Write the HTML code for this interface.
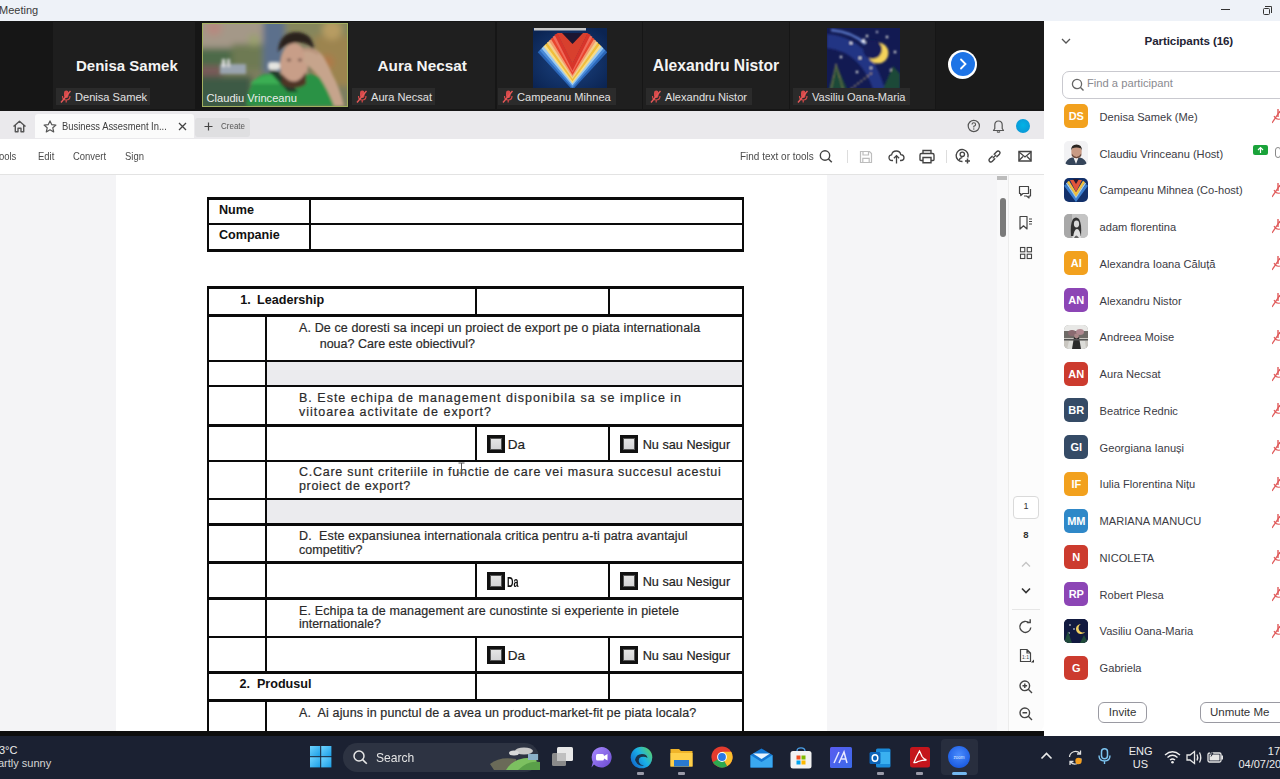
<!DOCTYPE html>
<html><head><meta charset="utf-8">
<style>
*{margin:0;padding:0;box-sizing:border-box}
html,body{width:1280px;height:779px;overflow:hidden;background:#fff;font-family:"Liberation Sans",sans-serif}
.a{position:absolute}
#title{left:0;top:0;width:1280px;height:21px;background:#eef2f8;color:#333;font-size:12px}
#strip{left:0;top:21px;width:1044px;height:90px;background:#1b1b1b}
.tile{position:absolute;top:1px;height:86px;background:#222}
.tname{position:absolute;left:0;right:0;top:34px;text-align:center;color:#fff;font-weight:bold;font-size:15px}
.lbl{position:absolute;top:67px;height:16px;background:#2e2e2e;color:#e6e6e6;font-size:12px;line-height:16px;padding-left:19px;padding-right:4px}
#acro{left:0;top:111px;width:1044px;height:618px;background:#fff}
#tabbar{left:0;top:0;width:1044px;height:27px;background:#e8e8ea}
#toolbar{left:0;top:27px;width:1044px;height:36px;background:#fff;border-bottom:1px solid #e4e4e4}
#content{left:0;top:63px;width:1044px;height:555px;background:#f1f1f3}
#page{left:116px;top:0;width:712px;height:555px;background:#fff}
#black{left:0;top:730.5px;width:1044px;height:6px;background:#0e0e0e}
#parts{left:1044px;top:21px;width:236px;height:715px;background:#fff}
#taskbar{left:0;top:735px;width:1280px;height:44px;background:#1c2130}
.t{white-space:pre;line-height:1}
.pt{-webkit-text-stroke:0.2px currentColor}
.cb{width:18px;height:18px;border:3px solid #111;background:linear-gradient(180deg,#e6e6e6,#d2d2d4);box-shadow:inset 0 0 0 1px #555}
.nm{font-size:15px;font-weight:bold;color:#f4f4f4}
.lb{top:88px;height:16.5px;background:#2b2b2b;color:#e2e2e2;font-size:11.1px;line-height:18.3px;padding-left:19px;white-space:nowrap;overflow:hidden}
.mic{position:absolute;left:4px;top:2px}
.av{left:1064.3px;width:24px;height:24px;border-radius:5px;color:#fff;font-weight:bold;font-size:11px;text-align:center;line-height:24px}
.pn{left:1099.6px;font-size:11.1px;color:#3b3b44}
.btn{border:1.2px solid #9a9aa2;border-radius:6px;background:#fff}
.sx{transform-origin:0 0}
.tb{font-size:11px;color:#4b4b4b;transform:scaleX(0.86);transform-origin:0 0}
</style></head><body>
<div class="a" style="left:0;top:0;width:1280px;height:21px;background:#eef2f8"></div>
<div class="a t" style="left:-1px;top:5.3px;font-size:11px;color:#3a3a3a">Meeting</div>
<div class="a" style="left:1221px;top:9px;width:9px;height:1.3px;background:#333"></div>
<div class="a" style="left:1263px;top:8px;width:7px;height:7px;border:1.3px solid #333;border-radius:1.5px"></div>
<div class="a" style="left:1265px;top:6px;width:7px;height:7px;border-top:1.3px solid #333;border-right:1.3px solid #333;border-radius:0 1.5px 0 0"></div>
<div class="a" style="left:0;top:21px;width:1044px;height:90px;background:#161616"></div>
<!-- tiles -->
<div class="a" style="left:53px;top:22px;width:142px;height:87px;background:#1e1e1e"></div>
<div class="a" style="left:349px;top:22px;width:146px;height:87px;background:#1f1f1f"></div>
<div class="a" style="left:497px;top:22px;width:145px;height:87px;background:#1f1f1f"></div>
<div class="a" style="left:643px;top:22px;width:146px;height:87px;background:#1f1f1f"></div>
<div class="a" style="left:790px;top:22px;width:145px;height:87px;background:#1f1f1f"></div>
<div class="a" style="left:936px;top:22px;width:108px;height:87px;background:#1a1a1a"></div>
<!-- bold names -->
<div class="a t nm" style="left:76px;top:57.5px;">Denisa Samek</div>
<div class="a t nm" style="left:377.5px;top:57.5px;font-size:15.3px">Aura Necsat</div>
<div class="a t nm" style="left:652.8px;top:57.5px;font-size:15.7px">Alexandru Nistor</div>
<!-- video tile -->
<div class="a" style="left:202px;top:22.5px;width:146px;height:84px;border:1.5px solid #a3b060;overflow:hidden;background:#7c8468">
<svg width="146" height="84" style="position:absolute;left:-1.5px;top:-1.5px">
<defs>
<filter id="bl" x="-20%" y="-20%" width="140%" height="140%"><feGaussianBlur stdDeviation="3"/></filter>
<filter id="bl2"><feGaussianBlur stdDeviation="1.4"/></filter>
</defs>
<g filter="url(#bl)">
<rect x="-10" y="-10" width="170" height="104" fill="#7e7e5e"/>
<rect x="-10" y="-10" width="72" height="38" fill="#a49888"/>
<rect x="-10" y="26" width="40" height="22" fill="#4d6a4a"/>
<rect x="30" y="22" width="32" height="26" fill="#6e7a52"/>
<rect x="-10" y="44" width="30" height="12" fill="#7a5a5a"/>
<rect x="61" y="-10" width="22" height="62" fill="#5b708c"/>
<rect x="83" y="-10" width="72" height="30" fill="#86865c"/>
<rect x="112" y="14" width="40" height="50" fill="#9c8450"/>
<rect x="-10" y="54" width="60" height="40" fill="#3e5a44"/>
<circle cx="12" cy="6" r="8" fill="#b58a80"/>
<circle cx="130" cy="8" r="10" fill="#b79c62"/>
<circle cx="125" cy="40" r="7" fill="#b0784a"/>
<circle cx="52" cy="18" r="6" fill="#9aa070"/>
</g>
<g filter="url(#bl2)">
<rect x="18" y="42" width="26" height="10" fill="#9aa4b0"/>
<rect x="20" y="37" width="3" height="8" fill="#e6e6e6"/>
<rect x="25" y="37" width="3" height="8" fill="#d6d6d6"/>
<path d="M44 84 Q46 58 62 52 L108 52 Q132 56 134 84Z" fill="#2c9244"/>
<path d="M48 62 Q58 51 76 53 L78 62Z" fill="#3aae52"/>
<path d="M66 48 Q72 46 82 54 L96 70 L86 70 Z" fill="#213a2a"/>
<rect x="66" y="40" width="12" height="8" rx="3" fill="#e4e4e0"/>
<ellipse cx="92" cy="43" rx="14" ry="22" fill="#c89e88"/>
<path d="M76 30 Q77 10 95 10 Q112 11 112 30 L107 23 Q94 17 80 26Z" fill="#2a221d"/>
<path d="M80 52 Q93 68 104 50 L104 62 Q93 70 80 62Z" fill="#4f3428"/>
<path d="M100 26 Q114 24 121 34 Q127 44 130 52 Q138 66 142 84 L132 84 Q126 68 118 56 Q110 46 101 40 Q104 34 100 26Z" fill="#c6a48c"/><path d="M100 28 Q110 27 116 32" stroke="#a9806a" stroke-width="1.2" fill="none"/><ellipse cx="87" cy="38" rx="2" ry="1.2" fill="#5a4035"/><ellipse cx="98" cy="38" rx="2" ry="1.2" fill="#5a4035"/>
</g>
</svg>
<div class="a t" style="left:3.6px;top:69.5px;font-size:11.1px;color:#ececec;line-height:1">Claudiu Vrinceanu</div>
</div>
<!-- avatars -->
<svg class="a" style="left:533px;top:28px" width="74" height="60" viewBox="0 0 74 60">
<defs><radialGradient id="nv" cx="50%" cy="55%" r="65%"><stop offset="0" stop-color="#1c4585"/><stop offset="1" stop-color="#0b2452"/></radialGradient>
<filter id="b1"><feGaussianBlur stdDeviation="0.7"/></filter></defs>
<rect width="74" height="60" fill="url(#nv)"/>
<rect x="1" y="0" width="52" height="2.5" fill="#c8c8c8"/>
<g filter="url(#b1)" fill="none" stroke-width="3.4" stroke-linejoin="miter" stroke-miterlimit="10">
<polygon points="24,5 39.5,36 55,5" fill="#d8402e" stroke="none"/>
<polygon points="29,5 39.5,16 50,5" fill="#1a1830" stroke="none"/>
<polyline points="6.0,23.0 39.5,59.5 73.0,23.0" stroke="#2a66b8"/><polyline points="7.9,21.1 39.5,57.2 71.1,21.1" stroke="#4a8ad8"/><polyline points="9.8,19.2 39.5,54.9 69.2,19.2" stroke="#9ccaf0"/><polyline points="11.7,17.3 39.5,52.7 67.3,17.3" stroke="#f6dc8a"/><polyline points="13.6,15.4 39.5,50.4 65.4,15.4" stroke="#f0be3a"/><polyline points="15.4,13.6 39.5,48.1 63.6,13.6" stroke="#f2d08a"/><polyline points="17.3,11.7 39.5,45.8 61.7,11.7" stroke="#f49a70"/><polyline points="19.2,9.8 39.5,43.6 59.8,9.8" stroke="#e8452e"/><polyline points="21.1,7.9 39.5,41.3 57.9,7.9" stroke="#f06a5a"/><polyline points="23.0,6.0 39.5,39.0 56.0,6.0" stroke="#d8362a"/>
</g>
</svg>
<svg class="a" style="left:827px;top:28px" width="73" height="61" viewBox="0 0 73 61">
<defs><filter id="b2"><feGaussianBlur stdDeviation="0.8"/></filter></defs>
<rect width="73" height="61" fill="#121a52"/>
<g filter="url(#b2)">
<path d="M0 6 Q28 8 44 30 Q52 42 58 61 L46 61 Q40 44 30 34 Q18 22 0 20Z" fill="#26378a" opacity="0.9"/>
<path d="M4 2 Q26 4 38 16" stroke="#5a78c8" stroke-width="2.5" fill="none"/>
<circle cx="51" cy="25" r="10.5" fill="#f4d35a"/>
<circle cx="45.5" cy="21.5" r="9.5" fill="#141c58"/>
<circle cx="24" cy="15" r="1.3" fill="#fff"/><circle cx="40" cy="8" r="1.2" fill="#ffe"/><circle cx="60" cy="9" r="1.2" fill="#ffe"/>
<circle cx="14" cy="29" r="1.2" fill="#ffe"/><circle cx="33" cy="30" r="1.2" fill="#ffe"/><circle cx="68" cy="24" r="1.2" fill="#ffe"/>
<circle cx="30" cy="44" r="1.2" fill="#ffe"/><circle cx="64" cy="42" r="1.2" fill="#ffe"/><circle cx="50" cy="4" r="1" fill="#fff"/><circle cx="44" cy="40" r="1" fill="#ffe"/>
<path d="M2 61 L9 36 L20 61Z" fill="#1e4a38"/>
<path d="M56 61 L66 38 L73 46 L73 61Z" fill="#1e4a38"/>
<path d="M9 36 L4 61 M9 36 L16 61" stroke="#b9a860" stroke-width="1" stroke-dasharray="1.5 1.5"/>
<path d="M24 61 L46 44" stroke="#c9b070" stroke-width="1.3" stroke-dasharray="2 2"/>
<path d="M34 14 L37 10 L39 15Z" fill="#fff"/>
</g>
</svg>
<!-- labels -->
<div class="a lb" style="left:56px;width:94px"><svg class="mic" width="11" height="13"><rect x="4" y="0.5" width="4.5" height="7.5" rx="2.2" fill="#d84a4a"/><path d="M2.5 6 Q2.5 10 6.2 10 Q10 10 10 6 M6.2 10 V12.5" fill="none" stroke="#d84a4a" stroke-width="1.2"/><line x1="1" y1="12.5" x2="10.5" y2="1" stroke="#e85858" stroke-width="1.4"/></svg>Denisa Samek</div>
<div class="a lb" style="left:352px;width:83px"><svg class="mic" width="11" height="13"><rect x="4" y="0.5" width="4.5" height="7.5" rx="2.2" fill="#d84a4a"/><path d="M2.5 6 Q2.5 10 6.2 10 Q10 10 10 6 M6.2 10 V12.5" fill="none" stroke="#d84a4a" stroke-width="1.2"/><line x1="1" y1="12.5" x2="10.5" y2="1" stroke="#e85858" stroke-width="1.4"/></svg>Aura Necsat</div>
<div class="a lb" style="left:498px;width:118px"><svg class="mic" width="11" height="13"><rect x="4" y="0.5" width="4.5" height="7.5" rx="2.2" fill="#d84a4a"/><path d="M2.5 6 Q2.5 10 6.2 10 Q10 10 10 6 M6.2 10 V12.5" fill="none" stroke="#d84a4a" stroke-width="1.2"/><line x1="1" y1="12.5" x2="10.5" y2="1" stroke="#e85858" stroke-width="1.4"/></svg>Campeanu Mihnea</div>
<div class="a lb" style="left:646px;width:106px"><svg class="mic" width="11" height="13"><rect x="4" y="0.5" width="4.5" height="7.5" rx="2.2" fill="#d84a4a"/><path d="M2.5 6 Q2.5 10 6.2 10 Q10 10 10 6 M6.2 10 V12.5" fill="none" stroke="#d84a4a" stroke-width="1.2"/><line x1="1" y1="12.5" x2="10.5" y2="1" stroke="#e85858" stroke-width="1.4"/></svg>Alexandru Nistor</div>
<div class="a lb" style="left:793px;width:117px"><svg class="mic" width="11" height="13"><rect x="4" y="0.5" width="4.5" height="7.5" rx="2.2" fill="#d84a4a"/><path d="M2.5 6 Q2.5 10 6.2 10 Q10 10 10 6 M6.2 10 V12.5" fill="none" stroke="#d84a4a" stroke-width="1.2"/><line x1="1" y1="12.5" x2="10.5" y2="1" stroke="#e85858" stroke-width="1.4"/></svg>Vasiliu Oana-Maria</div>
<!-- next arrow -->
<div class="a" style="left:948px;top:49.5px;width:29px;height:29px;border-radius:50%;background:#fff"></div>
<div class="a" style="left:950.5px;top:52px;width:24px;height:24px;border-radius:50%;background:#1e74e6"></div>
<svg class="a" style="left:955px;top:56px" width="16" height="16"><polyline points="6,3.5 10.5,8 6,12.5" fill="none" stroke="#fff" stroke-width="1.8" stroke-linecap="round"/></svg>

<div class="a" style="left:0;top:111px;width:1044px;height:27.5px;background:#eae9ec"></div>
<div class="a" style="left:34.6px;top:114px;width:159.5px;height:24px;background:#fbfbfb;border-radius:3px 3px 0 0"></div>
<div class="a" style="left:195px;top:118px;width:55px;height:18.5px;background:#dfdfe1;border-radius:3px"></div>
<svg class="a ic" style="left:12px;top:120px" width="15" height="13" viewBox="0 0 15 13"><path d="M1.5 6.5 L7.5 1.3 L13.5 6.5 M3.3 5.2 V11.8 H6 V8.3 H9 V11.8 H11.7 V5.2" fill="none" stroke="#555" stroke-width="1.4" stroke-linejoin="round"/></svg>
<svg class="a" style="left:43px;top:120px" width="14" height="13" viewBox="0 0 14 13"><path d="M7 0.9 L8.8 4.7 L12.9 5.1 L9.8 7.8 L10.7 11.9 L7 9.8 L3.3 11.9 L4.2 7.8 L1.1 5.1 L5.2 4.7Z" fill="none" stroke="#555" stroke-width="1.2" stroke-linejoin="round"/></svg>
<div class="a t sx" style="left:62px;top:121px;font-size:10.6px;color:#3c3c3c;transform:scaleX(0.885)">Business Assesment In...</div>
<svg class="a" style="left:178px;top:122px" width="9" height="9"><path d="M1 1 L8 8 M8 1 L1 8" stroke="#444" stroke-width="1.3"/></svg>
<svg class="a" style="left:204px;top:122px" width="9" height="9"><path d="M4.5 0.5 V8.5 M0.5 4.5 H8.5" stroke="#444" stroke-width="1.2"/></svg>
<div class="a t sx" style="left:220.5px;top:122px;font-size:9.3px;color:#555;transform:scaleX(0.86)">Create</div>
<svg class="a" style="left:966px;top:119px" width="15" height="15"><circle cx="7.8" cy="7" r="5.6" fill="none" stroke="#555" stroke-width="1.2"/><path d="M6 5.6 Q6 3.8 7.8 3.8 Q9.6 3.8 9.6 5.4 Q9.6 6.6 7.8 7.3 V8.4" fill="none" stroke="#555" stroke-width="1.1"/><circle cx="7.8" cy="10" r="0.7" fill="#555"/></svg>
<svg class="a" style="left:991px;top:119px" width="15" height="15"><path d="M2.5 11.5 H12.5 L11.2 9.5 V6 Q11.2 2 7.5 2 Q3.8 2 3.8 6 V9.5Z" fill="none" stroke="#555" stroke-width="1.2" stroke-linejoin="round"/><path d="M6 12.5 Q7.5 14 9 12.5" fill="none" stroke="#555" stroke-width="1.1"/></svg>
<div class="a" style="left:1016px;top:119.3px;width:14px;height:14px;border-radius:50%;background:radial-gradient(circle at 50% 45%,#00b3e6,#0a9ad8 70%,#7ad6f0 100%)"></div>
<!-- toolbar -->
<div class="a" style="left:0;top:138.5px;width:1044px;height:35.5px;background:#fff"></div>
<div class="a" style="left:0;top:174px;width:1044px;height:1px;background:#e3e3e3"></div>
<div class="a t tb" style="left:-1px;top:151px">ools</div>
<div class="a t tb" style="left:37.6px;top:151px">Edit</div>
<div class="a t tb" style="left:72.8px;top:151px">Convert</div>
<div class="a t tb" style="left:125px;top:151px">Sign</div>
<div class="a t tb" style="left:740px;top:150.5px;font-size:10.8px;transform:scaleX(0.925)">Find text or tools</div>
<svg class="a" style="left:818px;top:148px" width="16" height="16"><circle cx="7" cy="7.5" r="4.7" fill="none" stroke="#444" stroke-width="1.4"/><line x1="10.3" y1="10.8" x2="13.8" y2="14.3" stroke="#444" stroke-width="1.5"/></svg>
<div class="a" style="left:847px;top:150px;width:1px;height:13px;background:#ddd"></div>
<svg class="a" style="left:859px;top:150px" width="14" height="14"><path d="M1.5 1.5 H10.5 L12.5 3.5 V12.5 H1.5Z M4 1.5 V5 H9.5 V1.5 M3.8 12.5 V8.3 H10.2 V12.5" fill="none" stroke="#bdbdbd" stroke-width="1.2"/></svg>
<svg class="a" style="left:888px;top:149px" width="17" height="15"><path d="M5 11.5 H4 Q1 11.5 1 8.6 Q1 6 3.6 5.8 Q4.4 2 8.3 2 Q12 2 12.8 5.6 Q16 5.8 16 8.7 Q16 11.5 13 11.5 H12" fill="none" stroke="#444" stroke-width="1.3"/><path d="M8.5 14.5 V6.8 M5.9 9.2 L8.5 6.6 L11.1 9.2" fill="none" stroke="#444" stroke-width="1.3"/></svg>
<svg class="a" style="left:919px;top:149px" width="16" height="15"><path d="M4 4.5 V1.5 H12 V4.5 M4 11.5 H2 Q1 11.5 1 10.5 V6 Q1 4.5 2.5 4.5 H13.5 Q15 4.5 15 6 V10.5 Q15 11.5 14 11.5 H12 M4 8.5 H12 V13.8 H4Z" fill="none" stroke="#444" stroke-width="1.4"/></svg>
<div class="a" style="left:945.5px;top:150px;width:1px;height:13px;background:#ddd"></div>
<svg class="a" style="left:955px;top:148px" width="17" height="17"><path d="M12.8 9.5 A6 6 0 1 0 7.5 13.5" fill="none" stroke="#444" stroke-width="1.4"/><circle cx="7.3" cy="6.3" r="2.2" fill="none" stroke="#444" stroke-width="1.3"/><path d="M4.2 12 Q5 9.6 7.3 9.6" fill="none" stroke="#444" stroke-width="1.3"/><path d="M12.5 10.5 V15.5 M10 13 H15" stroke="#444" stroke-width="1.5"/></svg>
<svg class="a" style="left:987px;top:149px" width="15" height="15"><path d="M6.2 8.8 L8.8 6.2 M5.2 7.2 L2.8 9.6 Q1.3 11.1 2.6 12.4 Q3.9 13.7 5.4 12.2 L7.8 9.8 M7.2 5.2 L9.6 2.8 Q11.1 1.3 12.4 2.6 Q13.7 3.9 12.2 5.4 L9.8 7.8" fill="none" stroke="#444" stroke-width="1.4" stroke-linecap="round"/></svg>
<svg class="a" style="left:1018px;top:150px" width="14" height="13"><rect x="1" y="1.5" width="12" height="9.5" fill="none" stroke="#444" stroke-width="1.5"/><path d="M1 2 L7 7 L13 2 M1 10.5 L5 6.5 M13 10.5 L9 6.5" fill="none" stroke="#444" stroke-width="1.3"/></svg>
<!-- content area -->
<div class="a" style="left:0;top:175px;width:116px;height:557px;background:#f4f4f6"></div>
<div class="a" style="left:116px;top:175px;width:711px;height:557px;background:#fff"></div>
<div class="a" style="left:827px;top:175px;width:170px;height:557px;background:#f5f5f7"></div>
<div class="a" style="left:997px;top:175px;width:11px;height:557px;background:#f9f9fa"></div>
<div class="a" style="left:997px;top:176px;width:10px;height:4px;background:#bcbcbc"></div>
<div class="a" style="left:999.5px;top:198px;width:6.2px;height:39px;background:#7a7a7a;border-radius:3px"></div>
<div class="a" style="left:1008px;top:175px;width:36px;height:557px;background:#fcfcfc;border-left:1px solid #ececec;border-radius:0 0 8px 0"></div>
<svg class="a" style="left:1018px;top:185px" width="16" height="16"><path d="M1.5 1.5 H10.5 V8.5 H5 L2.8 10.5 V8.5 H1.5Z" fill="none" stroke="#444" stroke-width="1.2" stroke-linejoin="round"/><path d="M12.5 4 V11 H11 V13 L8.6 11 H6" fill="none" stroke="#444" stroke-width="1.2" stroke-linejoin="round"/></svg>
<svg class="a" style="left:1018px;top:215px" width="16" height="16"><path d="M2 1.5 H9 V14 L5.5 10.8 L2 14Z" fill="none" stroke="#444" stroke-width="1.2" stroke-linejoin="round"/><path d="M11 4 H14 M11 6.5 H14 M11 9 H14" stroke="#444" stroke-width="1"/></svg>
<svg class="a" style="left:1019px;top:246px" width="14" height="14"><rect x="1.5" y="1.5" width="4.3" height="4.3" fill="none" stroke="#444" stroke-width="1.1"/><rect x="8.2" y="1.5" width="4.3" height="4.3" fill="none" stroke="#444" stroke-width="1.1"/><rect x="1.5" y="8.2" width="4.3" height="4.3" fill="none" stroke="#444" stroke-width="1.1"/><rect x="8.2" y="8.2" width="4.3" height="4.3" fill="none" stroke="#444" stroke-width="1.1"/></svg>
<div class="a" style="left:1013px;top:495.7px;width:26px;height:23.3px;border:1px solid #dadada;border-radius:4px;background:#fff"></div>
<div class="a t" style="left:1013px;width:26px;text-align:center;top:501.5px;font-size:9px;color:#333">1</div>
<div class="a t" style="left:1013px;width:26px;text-align:center;top:529.5px;font-size:9.5px;font-weight:bold;color:#333">8</div>
<svg class="a" style="left:1020px;top:560px" width="12" height="9"><polyline points="2,6.5 6,2.5 10,6.5" fill="none" stroke="#c4c4c4" stroke-width="1.3"/></svg>
<svg class="a" style="left:1020px;top:586px" width="12" height="9"><polyline points="2,2.5 6,6.5 10,2.5" fill="none" stroke="#333" stroke-width="1.6"/></svg>
<div class="a" style="left:1012px;top:609px;width:28px;height:1px;background:#e6e6e6"></div>
<svg class="a" style="left:1018px;top:619px" width="16" height="16"><path d="M12.8 8.5 A5.5 5.5 0 1 1 11 3.8" fill="none" stroke="#444" stroke-width="1.4"/><path d="M8.8 3.5 H12.2 V0.3" fill="none" stroke="#444" stroke-width="1.4"/></svg>
<svg class="a" style="left:1018px;top:648px" width="17" height="17"><path d="M2.5 1.5 H9 L12.5 5 V13.5 H2.5Z M9 1.5 V5 H12.5" fill="none" stroke="#444" stroke-width="1.2"/><text x="4" y="11" font-size="5" font-family="Liberation Sans" fill="#444">1:1</text><path d="M13 14.5 L16 14.5 L16 11.5Z" fill="#333"/></svg>
<svg class="a" style="left:1018px;top:679px" width="16" height="16"><circle cx="6.8" cy="6.8" r="4.8" fill="none" stroke="#444" stroke-width="1.4"/><path d="M10.3 10.3 L14 14 M4.5 6.8 H9.1 M6.8 4.5 V9.1" stroke="#444" stroke-width="1.4"/></svg>
<svg class="a" style="left:1018px;top:706px" width="16" height="16"><circle cx="6.8" cy="6.8" r="4.8" fill="none" stroke="#444" stroke-width="1.4"/><path d="M10.3 10.3 L14 14 M4.5 6.8 H9.1" stroke="#444" stroke-width="1.4"/></svg>

<div id="pdf" class="a" style="left:0;top:0;width:1044px;height:730.5px;overflow:hidden">
<div class="a" style="left:206.5px;top:197px;width:537.5px;height:2.5px;background:#0a0a0a"></div>
<div class="a" style="left:206.5px;top:223px;width:537.5px;height:2px;background:#0a0a0a"></div>
<div class="a" style="left:206.5px;top:249px;width:537.5px;height:2.5px;background:#0a0a0a"></div>
<div class="a" style="left:206.5px;top:197px;width:2.1999999999999886px;height:54.5px;background:#0a0a0a"></div>
<div class="a" style="left:742px;top:197px;width:2.2999999999999545px;height:54.5px;background:#0a0a0a"></div>
<div class="a" style="left:308.5px;top:197px;width:2.0px;height:54.5px;background:#0a0a0a"></div>
<div class="a t" style="left:218.9px;top:203.59px;font-size:12.6px;letter-spacing:0px;color:#111;font-weight:bold;">Nume</div>
<div class="a t" style="left:218.9px;top:229.09px;font-size:12.6px;letter-spacing:0px;color:#111;font-weight:bold;">Companie</div>
<div class="a" style="left:206.5px;top:286.3px;width:537.8px;height:2.3999999999999773px;background:#0a0a0a"></div>
<div class="a" style="left:206.5px;top:314.3px;width:537.8px;height:2.3999999999999773px;background:#0a0a0a"></div>
<div class="a" style="left:206.5px;top:359.8px;width:537.8px;height:2.3999999999999773px;background:#0a0a0a"></div>
<div class="a" style="left:206.5px;top:384.8px;width:537.8px;height:2.3999999999999773px;background:#0a0a0a"></div>
<div class="a" style="left:206.5px;top:424.3px;width:537.8px;height:2.3999999999999773px;background:#0a0a0a"></div>
<div class="a" style="left:206.5px;top:459.8px;width:537.8px;height:2.3999999999999773px;background:#0a0a0a"></div>
<div class="a" style="left:206.5px;top:497.8px;width:537.8px;height:2.3999999999999773px;background:#0a0a0a"></div>
<div class="a" style="left:206.5px;top:523.3px;width:537.8px;height:2.400000000000091px;background:#0a0a0a"></div>
<div class="a" style="left:206.5px;top:561.3px;width:537.8px;height:2.400000000000091px;background:#0a0a0a"></div>
<div class="a" style="left:206.5px;top:597.3px;width:537.8px;height:2.400000000000091px;background:#0a0a0a"></div>
<div class="a" style="left:206.5px;top:635.8px;width:537.8px;height:2.400000000000091px;background:#0a0a0a"></div>
<div class="a" style="left:206.5px;top:671.3px;width:537.8px;height:2.400000000000091px;background:#0a0a0a"></div>
<div class="a" style="left:206.5px;top:699.3px;width:537.8px;height:2.400000000000091px;background:#0a0a0a"></div>
<div class="a" style="left:206.5px;top:286.3px;width:2.1999999999999886px;height:453.7px;background:#0a0a0a"></div>
<div class="a" style="left:742px;top:286.3px;width:2.2999999999999545px;height:453.7px;background:#0a0a0a"></div>
<div class="a" style="left:265px;top:315.5px;width:2.1999999999999886px;height:357.0px;background:#0a0a0a"></div>
<div class="a" style="left:265px;top:700.5px;width:2.1999999999999886px;height:39.5px;background:#0a0a0a"></div>
<div class="a" style="left:474.5px;top:287.5px;width:2.1999999999999886px;height:28.0px;background:#0a0a0a"></div>
<div class="a" style="left:608px;top:287.5px;width:2.2000000000000455px;height:28.0px;background:#0a0a0a"></div>
<div class="a" style="left:474.5px;top:425.5px;width:2.1999999999999886px;height:35.5px;background:#0a0a0a"></div>
<div class="a" style="left:608px;top:425.5px;width:2.2000000000000455px;height:35.5px;background:#0a0a0a"></div>
<div class="a" style="left:474.5px;top:562.5px;width:2.1999999999999886px;height:36.0px;background:#0a0a0a"></div>
<div class="a" style="left:608px;top:562.5px;width:2.2000000000000455px;height:36.0px;background:#0a0a0a"></div>
<div class="a" style="left:474.5px;top:637px;width:2.1999999999999886px;height:63.5px;background:#0a0a0a"></div>
<div class="a" style="left:608px;top:637px;width:2.2000000000000455px;height:63.5px;background:#0a0a0a"></div>
<div class="a" style="left:267.2px;top:362.2px;width:474.8px;height:22.6px;background:#ebebee"></div>
<div class="a" style="left:267.2px;top:500.2px;width:474.8px;height:23.1px;background:#ebebee"></div>
<div class="a t" style="left:240.3px;top:293.89px;font-size:12.6px;letter-spacing:0px;color:#111;font-weight:bold;">1.</div>
<div class="a t" style="left:257px;top:293.89px;font-size:12.6px;letter-spacing:0px;color:#111;font-weight:bold;">Leadership</div>
<div class="a t" style="left:239.5px;top:677.89px;font-size:12.6px;letter-spacing:0px;color:#111;font-weight:bold;">2.</div>
<div class="a t" style="left:256.9px;top:677.89px;font-size:12.6px;letter-spacing:0px;color:#111;font-weight:bold;">Produsul</div>
<div class="a t pt" style="left:299px;top:321.57px;font-size:12.5px;letter-spacing:0.118px;color:#2a2a2a;">A. De ce doresti sa incepi un proiect de export pe o piata internationala</div>
<div class="a t pt" style="left:319.7px;top:337.68px;font-size:12.5px;letter-spacing:0.011px;color:#2a2a2a;">noua? Care este obiectivul?</div>
<div class="a t pt" style="left:299px;top:391.88px;font-size:12.5px;letter-spacing:1.003px;color:#2a2a2a;">B. Este echipa de management disponibila sa se implice in</div>
<div class="a t pt" style="left:299px;top:405.68px;font-size:12.5px;letter-spacing:0.981px;color:#2a2a2a;">viitoarea activitate de export?</div>
<div class="a t pt" style="left:299px;top:466.07px;font-size:12.5px;letter-spacing:0.737px;color:#2a2a2a;">C.Care sunt criteriile in functie de care vei masura succesul acestui</div>
<div class="a t pt" style="left:299px;top:480.18px;font-size:12.5px;letter-spacing:0.661px;color:#2a2a2a;">proiect de export?</div>
<div class="a t pt" style="left:299px;top:529.88px;font-size:12.5px;letter-spacing:0.142px;color:#2a2a2a;">D.  Este expansiunea internationala critica pentru a-ti patra avantajul</div>
<div class="a t pt" style="left:299px;top:543.88px;font-size:12.5px;letter-spacing:0.034px;color:#2a2a2a;">competitiv?</div>
<div class="a t pt" style="left:299px;top:604.67px;font-size:12.5px;letter-spacing:0.136px;color:#2a2a2a;">E. Echipa ta de management are cunostinte si experiente in pietele</div>
<div class="a t pt" style="left:299px;top:617.67px;font-size:12.5px;letter-spacing:-0.012px;color:#2a2a2a;">internationale?</div>
<div class="a t pt" style="left:299px;top:706.58px;font-size:12.5px;letter-spacing:0.133px;color:#2a2a2a;">A.  Ai ajuns in punctul de a avea un product-market-fit pe piata locala?</div>
<div class="a cb" style="left:486.5px;top:434.7px"></div>
<div class="a cb" style="left:620.2px;top:434.7px"></div>
<div class="a t pt" style="left:507.7px;top:437.82px;font-size:13.5px;letter-spacing:0px;color:#222;">Da</div>
<div class="a t pt" style="left:642.7px;top:438.50px;font-size:12.7px;letter-spacing:0px;color:#222;">Nu sau Nesigur</div>
<div class="a cb" style="left:486.5px;top:572px"></div>
<div class="a cb" style="left:620.2px;top:572px"></div>
<div class="a t" style="left:506.7px;top:574.90px;font-size:14px;letter-spacing:0px;color:#111;font-weight:bold;transform:scaleX(0.64);transform-origin:0 0;">Da</div>
<div class="a t pt" style="left:642.7px;top:576.00px;font-size:12.7px;letter-spacing:0px;color:#222;">Nu sau Nesigur</div>
<div class="a cb" style="left:486.5px;top:646.2px"></div>
<div class="a cb" style="left:620.2px;top:646.2px"></div>
<div class="a t pt" style="left:507.7px;top:649.32px;font-size:13.5px;letter-spacing:0px;color:#222;">Da</div>
<div class="a t pt" style="left:642.7px;top:650.00px;font-size:12.7px;letter-spacing:0px;color:#222;">Nu sau Nesigur</div>
<svg class="a" style="left:457px;top:462px" width="9" height="12"><path d="M1.5 1 H7.5 M4.5 1 V11 M1.5 11 H7.5" stroke="#555" stroke-width="1"/></svg>
</div>
<div id="black" class="a"></div>
<div class="a" style="left:1044px;top:21px;width:236px;height:715px;background:#fff"></div>
<svg class="a" style="left:1060px;top:36px" width="12" height="10"><polyline points="2,3 6,7 10,3" fill="none" stroke="#555" stroke-width="1.3"/></svg>
<div class="a t" style="left:1144.6px;top:35.2px;font-size:11.6px;font-weight:bold;color:#232333;letter-spacing:-0.1px">Participants (16)</div>
<div class="a" style="left:1062px;top:70.5px;width:230px;height:28px;border:1.2px solid #c9c9cf;border-radius:7px;background:#fff"></div>
<svg class="a" style="left:1070px;top:77px" width="16" height="16"><circle cx="7" cy="7" r="4.6" fill="none" stroke="#666" stroke-width="1.3"/><line x1="10.3" y1="10.3" x2="13.5" y2="13.5" stroke="#666" stroke-width="1.4"/></svg>
<div class="a t" style="left:1087px;top:78px;font-size:11.2px;color:#8a8a90">Find a participant</div>
<div class="a av" style="top:104.0px;background:#f2a11e"><span>DS</span></div>
<div class="a t pn" style="top:111.77px">Denisa Samek (Me)</div>
<svg class="a" style="left:1272px;top:108.0px" width="8" height="16"><path d="M6 1 L6 9" stroke="#e05a5a" stroke-width="1.4"/><line x1="0" y1="15" x2="8" y2="3" stroke="#e05a5a" stroke-width="1.3"/><path d="M2 8 Q4 12 8 11" fill="none" stroke="#e05a5a" stroke-width="1.1"/></svg>
<div class="a av" style="top:140.8px;background:#f4f4f6;overflow:hidden"><svg width="24" height="24"><defs><filter id="cf"><feGaussianBlur stdDeviation="0.35"/></filter></defs><g filter="url(#cf)"><rect width="24" height="24" fill="#f2f2f4"/><path d="M1 24 Q2 18 8 16.5 L16 16.5 Q22 18 23 24Z" fill="#34445a"/><path d="M9.5 16.5 L12 23 L14.5 16.5Z" fill="#f0f0f0"/><ellipse cx="12.5" cy="11" rx="5.2" ry="6.3" fill="#c89a84"/><path d="M7 9.5 Q7 3.5 12.5 3.5 Q18 3.5 18 9.5 L17 7.5 Q12.5 5.5 8 7.5Z" fill="#2c2622"/><path d="M7.6 12.5 Q12.5 19.5 17.4 12.5 L17.2 15 Q12.5 19.5 7.8 15Z" fill="#6a4a3c"/></g></svg></div>
<div class="a t pn" style="top:148.53px">Claudiu Vrinceanu (Host)</div>
<div class="a" style="left:1253px;top:145.2px;width:15px;height:10px;background:#1aa33a;border-radius:2px"></div>
<svg class="a" style="left:1254px;top:145.2px" width="13" height="10"><polyline points="4,5 6.5,2.5 9,5" fill="none" stroke="#fff" stroke-width="1.2"/><line x1="6.5" y1="3" x2="6.5" y2="8" stroke="#fff" stroke-width="1.2"/></svg>
<div class="a" style="left:1275px;top:146.8px;width:6px;height:11px;border:1.3px solid #888;border-radius:3px"></div>
<div class="a av" style="top:177.6px;background:#12306a;overflow:hidden"><svg width="24" height="24"><polyline points="1,7 12,22 23,7" fill="none" stroke="#3b7fd0" stroke-width="2.4"/><polyline points="2.5,5 12,19 21.5,5" fill="none" stroke="#9ccaf0" stroke-width="1.6"/><polyline points="4,3.5 12,16.5 20,3.5" fill="none" stroke="#f0c040" stroke-width="2.4"/><polygon points="6,2 12,14 18,2" fill="#e2543a"/><polygon points="9,1 12,6 15,1" fill="#2a1a30"/></svg></div>
<div class="a t pn" style="top:185.28px">Campeanu Mihnea (Co-host)</div>
<svg class="a" style="left:1272px;top:181.6px" width="8" height="16"><path d="M6 1 L6 9" stroke="#e05a5a" stroke-width="1.4"/><line x1="0" y1="15" x2="8" y2="3" stroke="#e05a5a" stroke-width="1.3"/><path d="M2 8 Q4 12 8 11" fill="none" stroke="#e05a5a" stroke-width="1.1"/></svg>
<div class="a av" style="top:214.3px;background:#bdbdbd;overflow:hidden"><svg width="24" height="24"><defs><filter id="af"><feGaussianBlur stdDeviation="0.6"/></filter></defs><g filter="url(#af)"><rect width="24" height="24" fill="#c4c4c4"/><rect x="0" y="0" width="8" height="24" fill="#a8a8a8"/><path d="M7 22 Q6 10 9 5 Q12 2 15 5 Q18 10 17 22Z" fill="#333"/><ellipse cx="12.5" cy="10" rx="2.6" ry="3.4" fill="#d8d8d8"/><path d="M9 24 Q10 15 13 15 Q16 15 17 24Z" fill="#e0e0e0"/><path d="M10 24 Q12 19 15 24Z" fill="#666"/></g></svg></div>
<div class="a t pn" style="top:222.05px">adam florentina</div>
<svg class="a" style="left:1272px;top:218.3px" width="8" height="16"><path d="M6 1 L6 9" stroke="#e05a5a" stroke-width="1.4"/><line x1="0" y1="15" x2="8" y2="3" stroke="#e05a5a" stroke-width="1.3"/><path d="M2 8 Q4 12 8 11" fill="none" stroke="#e05a5a" stroke-width="1.1"/></svg>
<div class="a av" style="top:251.1px;background:#f2a11e"><span>AI</span></div>
<div class="a t pn" style="top:258.81px">Alexandra Ioana Căluță</div>
<svg class="a" style="left:1272px;top:255.1px" width="8" height="16"><path d="M6 1 L6 9" stroke="#e05a5a" stroke-width="1.4"/><line x1="0" y1="15" x2="8" y2="3" stroke="#e05a5a" stroke-width="1.3"/><path d="M2 8 Q4 12 8 11" fill="none" stroke="#e05a5a" stroke-width="1.1"/></svg>
<div class="a av" style="top:287.9px;background:#8c45b5"><span>AN</span></div>
<div class="a t pn" style="top:295.56px">Alexandru Nistor</div>
<svg class="a" style="left:1272px;top:291.9px" width="8" height="16"><path d="M6 1 L6 9" stroke="#e05a5a" stroke-width="1.4"/><line x1="0" y1="15" x2="8" y2="3" stroke="#e05a5a" stroke-width="1.3"/><path d="M2 8 Q4 12 8 11" fill="none" stroke="#e05a5a" stroke-width="1.1"/></svg>
<div class="a av" style="top:324.7px;background:#9a9a96;overflow:hidden"><svg width="24" height="24"><defs><filter id="anf"><feGaussianBlur stdDeviation="0.6"/></filter></defs><g filter="url(#anf)"><rect width="24" height="24" fill="#c9c6c0"/><rect y="0" width="24" height="6" fill="#e8e8e6"/><rect y="6" width="24" height="7" fill="#6e6a66"/><ellipse cx="8" cy="8" rx="4" ry="3" fill="#8a6a70"/><ellipse cx="16" cy="7" rx="4" ry="3" fill="#b08890"/><path d="M3 24 L5 16 L21 16 L22 24Z" fill="#dcdcd8"/><path d="M8 24 L10 12 L15 12 L17 24Z" fill="#2a2a2a"/><circle cx="12.5" cy="11" r="2.4" fill="#a88"/><rect y="14" width="24" height="1.5" fill="#555"/></g></svg></div>
<div class="a t pn" style="top:332.32px">Andreea Moise</div>
<svg class="a" style="left:1272px;top:328.7px" width="8" height="16"><path d="M6 1 L6 9" stroke="#e05a5a" stroke-width="1.4"/><line x1="0" y1="15" x2="8" y2="3" stroke="#e05a5a" stroke-width="1.3"/><path d="M2 8 Q4 12 8 11" fill="none" stroke="#e05a5a" stroke-width="1.1"/></svg>
<div class="a av" style="top:361.5px;background:#cc3b2e"><span>AN</span></div>
<div class="a t pn" style="top:369.08px">Aura Necsat</div>
<svg class="a" style="left:1272px;top:365.5px" width="8" height="16"><path d="M6 1 L6 9" stroke="#e05a5a" stroke-width="1.4"/><line x1="0" y1="15" x2="8" y2="3" stroke="#e05a5a" stroke-width="1.3"/><path d="M2 8 Q4 12 8 11" fill="none" stroke="#e05a5a" stroke-width="1.1"/></svg>
<div class="a av" style="top:398.2px;background:#354b66"><span>BR</span></div>
<div class="a t pn" style="top:405.84px">Beatrice Rednic</div>
<svg class="a" style="left:1272px;top:402.2px" width="8" height="16"><path d="M6 1 L6 9" stroke="#e05a5a" stroke-width="1.4"/><line x1="0" y1="15" x2="8" y2="3" stroke="#e05a5a" stroke-width="1.3"/><path d="M2 8 Q4 12 8 11" fill="none" stroke="#e05a5a" stroke-width="1.1"/></svg>
<div class="a av" style="top:435.0px;background:#354b66"><span>GI</span></div>
<div class="a t pn" style="top:442.60px">Georgiana Ianuși</div>
<svg class="a" style="left:1272px;top:439.0px" width="8" height="16"><path d="M6 1 L6 9" stroke="#e05a5a" stroke-width="1.4"/><line x1="0" y1="15" x2="8" y2="3" stroke="#e05a5a" stroke-width="1.3"/><path d="M2 8 Q4 12 8 11" fill="none" stroke="#e05a5a" stroke-width="1.1"/></svg>
<div class="a av" style="top:471.8px;background:#f2a11e"><span>IF</span></div>
<div class="a t pn" style="top:479.36px">Iulia Florentina Nițu</div>
<svg class="a" style="left:1272px;top:475.8px" width="8" height="16"><path d="M6 1 L6 9" stroke="#e05a5a" stroke-width="1.4"/><line x1="0" y1="15" x2="8" y2="3" stroke="#e05a5a" stroke-width="1.3"/><path d="M2 8 Q4 12 8 11" fill="none" stroke="#e05a5a" stroke-width="1.1"/></svg>
<div class="a av" style="top:508.6px;background:#2f88c8"><span>MM</span></div>
<div class="a t pn" style="top:516.12px">MARIANA MANUCU</div>
<svg class="a" style="left:1272px;top:512.6px" width="8" height="16"><path d="M6 1 L6 9" stroke="#e05a5a" stroke-width="1.4"/><line x1="0" y1="15" x2="8" y2="3" stroke="#e05a5a" stroke-width="1.3"/><path d="M2 8 Q4 12 8 11" fill="none" stroke="#e05a5a" stroke-width="1.1"/></svg>
<div class="a av" style="top:545.4px;background:#cc3b2e"><span>N</span></div>
<div class="a t pn" style="top:552.89px">NICOLETA</div>
<svg class="a" style="left:1272px;top:549.4px" width="8" height="16"><path d="M6 1 L6 9" stroke="#e05a5a" stroke-width="1.4"/><line x1="0" y1="15" x2="8" y2="3" stroke="#e05a5a" stroke-width="1.3"/><path d="M2 8 Q4 12 8 11" fill="none" stroke="#e05a5a" stroke-width="1.1"/></svg>
<div class="a av" style="top:582.1px;background:#8c45b5"><span>RP</span></div>
<div class="a t pn" style="top:589.65px">Robert Plesa</div>
<svg class="a" style="left:1272px;top:586.1px" width="8" height="16"><path d="M6 1 L6 9" stroke="#e05a5a" stroke-width="1.4"/><line x1="0" y1="15" x2="8" y2="3" stroke="#e05a5a" stroke-width="1.3"/><path d="M2 8 Q4 12 8 11" fill="none" stroke="#e05a5a" stroke-width="1.1"/></svg>
<div class="a av" style="top:618.9px;background:#10183a;overflow:hidden"><svg width="24" height="24"><rect width="24" height="24" fill="#121a40"/><path d="M17 5 A5 5 0 1 0 21 13 A3.8 3.8 0 1 1 17 5Z" fill="#f2d060"/><circle cx="6" cy="6" r="0.8" fill="#fff"/><circle cx="10" cy="10" r="0.8" fill="#fff"/><circle cx="5" cy="14" r="0.8" fill="#fff"/><path d="M0 24 L4 12 L8 24Z" fill="#1f4a3a"/><path d="M16 24 L20 16 L24 24Z" fill="#1f4a3a"/></svg></div>
<div class="a t pn" style="top:626.41px">Vasiliu Oana-Maria</div>
<svg class="a" style="left:1272px;top:622.9px" width="8" height="16"><path d="M6 1 L6 9" stroke="#e05a5a" stroke-width="1.4"/><line x1="0" y1="15" x2="8" y2="3" stroke="#e05a5a" stroke-width="1.3"/><path d="M2 8 Q4 12 8 11" fill="none" stroke="#e05a5a" stroke-width="1.1"/></svg>
<div class="a av" style="top:655.7px;background:#cc3b2e"><span>G</span></div>
<div class="a t pn" style="top:663.17px">Gabriela</div>
<div class="a btn" style="left:1098.2px;top:702px;width:49px;height:21px"></div>
<div class="a t" style="left:1108.8px;top:707px;font-size:11.5px;color:#333">Invite</div>
<div class="a btn" style="left:1200px;top:702px;width:90px;height:21px"></div>
<div class="a t" style="left:1210px;top:707px;font-size:11.5px;color:#333">Unmute Me</div>
<div class="a" style="left:0;top:736px;width:1280px;height:43px;background:#1b2132"></div>
<div class="a t" style="left:-1px;top:744.8px;font-size:11px;color:#ececec">3°C</div>
<div class="a t" style="left:-2px;top:758px;font-size:11px;color:#d6d6d6">artly sunny</div>
<!-- windows logo -->
<svg class="a" style="left:309.5px;top:746.4px" width="22" height="22"><defs><linearGradient id="wg" x1="0" y1="0" x2="1" y2="1"><stop offset="0" stop-color="#6fd3ff"/><stop offset="1" stop-color="#1a9ee6"/></linearGradient></defs><rect x="0" y="0" width="10.2" height="10.2" fill="url(#wg)"/><rect x="11.2" y="0" width="10.2" height="10.2" fill="url(#wg)"/><rect x="0" y="11.2" width="10.2" height="10.2" fill="url(#wg)"/><rect x="11.2" y="11.2" width="10.2" height="10.2" fill="url(#wg)"/></svg>
<!-- search pill -->
<div class="a" style="left:343px;top:743px;width:196px;height:28.6px;border-radius:14.3px;background:#2d3342"></div>
<svg class="a" style="left:352px;top:749px" width="17" height="17"><circle cx="7" cy="7" r="5" fill="none" stroke="#e6e6e6" stroke-width="1.5"/><line x1="10.6" y1="10.6" x2="14.8" y2="14.8" stroke="#e6e6e6" stroke-width="1.6"/></svg>
<div class="a t" style="left:375.7px;top:751px;font-size:13px;color:#e4e4e4;transform:scaleX(0.93);transform-origin:0 0">Search</div>
<svg class="a" style="left:488px;top:744px" width="52" height="28"><defs><filter id="ilb"><feGaussianBlur stdDeviation="0.6"/></filter></defs><g filter="url(#ilb)"><ellipse cx="36" cy="7" rx="9" ry="3.5" fill="#c8c8c8"/><ellipse cx="26" cy="9" rx="5" ry="2.5" fill="#d8d8d8"/><path d="M2 20 Q12 12 28 15 L30 26 L6 26Z" fill="#6a6a58"/><path d="M18 26 Q26 12 48 14 L50 26Z" fill="#7cc060"/><path d="M30 26 Q40 16 52 18 L52 26Z" fill="#5aa048"/><rect x="40" y="10" width="10" height="6" fill="#8ab0c8"/></g></svg>
<!-- task view -->
<svg class="a" style="left:551px;top:746px" width="23" height="22"><rect x="6" y="1" width="16" height="14" rx="1.5" fill="#e8e8e8"/><rect x="1" y="7" width="14" height="13" rx="1.5" fill="#8a8a8a"/><rect x="6" y="7" width="9" height="8" fill="#c0c0c0"/></svg>
<!-- chat -->
<svg class="a" style="left:590px;top:746px" width="23" height="23"><defs><linearGradient id="tg" x1="0" y1="0" x2="1" y2="1"><stop offset="0" stop-color="#a98aff"/><stop offset="1" stop-color="#6a4ad0"/></linearGradient></defs><path d="M11.5 1 A10.3 10.3 0 1 1 4 18.5 L1.5 21.5 L2.8 16 A10.3 10.3 0 0 1 11.5 1Z" fill="url(#tg)"/><rect x="6" y="8" width="8" height="6.5" rx="1.5" fill="#fff"/><path d="M14 10 L17.5 8 V14.5 L14 12.5Z" fill="#fff"/></svg>
<!-- edge -->
<svg class="a" style="left:629.5px;top:746px" width="23" height="23"><defs><linearGradient id="eg" x1="1" y1="0.2" x2="0" y2="0.9"><stop offset="0" stop-color="#5ad06a"/><stop offset="0.45" stop-color="#1ab0e8"/><stop offset="1" stop-color="#1060c8"/></linearGradient></defs><circle cx="11.5" cy="11.5" r="10.8" fill="url(#eg)"/><path d="M5 14 Q6 8 12 8 Q17 8 17.5 12 Q15 10 11 11 Q8 12 9 16 Q10 19 14 19.5 Q8 21 5 14Z" fill="#1a2132" opacity="0.85"/></svg>
<div class="a" style="left:637px;top:772px;width:7px;height:2.5px;border-radius:1px;background:#9a9aa8"></div>
<!-- explorer -->
<svg class="a" style="left:670px;top:747px" width="23" height="21"><path d="M0.5 2 H9 L11 4 H22.5 V19.5 H0.5Z" fill="#f0b429"/><rect x="0.5" y="6" width="22" height="13.5" fill="#ffd04a"/><rect x="4" y="13" width="15" height="6.5" fill="#2a7ad0"/></svg>
<div class="a" style="left:677.5px;top:772px;width:7px;height:2.5px;border-radius:1px;background:#9a9aa8"></div>
<!-- chrome -->
<svg class="a" style="left:710.6px;top:746.3px" width="22" height="22" viewBox="0 0 22 22"><circle cx="11" cy="11" r="10.6" fill="#e33b2e"/><path d="M11 11 L1.8 16.3 A10.6 10.6 0 0 0 16.3 20.2Z" fill="#2da94f"/><path d="M11 11 L16.3 20.2 A10.6 10.6 0 0 0 20.2 5.7 L11 5.7Z" fill="#fbc02d"/><circle cx="11" cy="11" r="4.9" fill="#fff"/><circle cx="11" cy="11" r="3.9" fill="#2a79e6"/></svg>
<!-- mail -->
<svg class="a" style="left:749.7px;top:747.9px" width="23" height="20"><path d="M0.5 7 L11.5 0.5 L22.5 7 V19.5 H0.5Z" fill="#1277d4"/><path d="M0.5 7 L11.5 14 L22.5 7 V19.5 H0.5Z" fill="#3aa8f0"/><path d="M3 5.5 H20 L11.5 11Z" fill="#e8f4ff"/></svg>
<!-- store -->
<svg class="a" style="left:790px;top:746.5px" width="22" height="22"><path d="M7 4 Q7 0.8 11 0.8 Q15 0.8 15 4" fill="none" stroke="#4aa0e8" stroke-width="1.3"/><rect x="0.5" y="4" width="21" height="17.5" rx="2.5" fill="#f2f2f2"/><rect x="6.5" y="8.5" width="4" height="4" fill="#f25022"/><rect x="11.5" y="8.5" width="4" height="4" fill="#7fba00"/><rect x="6.5" y="13.5" width="4" height="4" fill="#00a4ef"/><rect x="11.5" y="13.5" width="4" height="4" fill="#ffb900"/></svg>
<!-- M/A app -->
<svg class="a" style="left:830px;top:746.7px" width="22" height="21"><defs><linearGradient id="mg" x1="0" y1="0" x2="1" y2="1"><stop offset="0" stop-color="#5a5cf0"/><stop offset="1" stop-color="#3a6ae8"/></linearGradient></defs><rect width="22" height="21" rx="1.5" fill="url(#mg)"/><path d="M4 16 L9 5 M9 16 L14 5 L17 16 M11.5 12 H16" stroke="#e8e8ff" stroke-width="1.5" fill="none"/></svg>
<!-- outlook -->
<svg class="a" style="left:869px;top:746.5px" width="22" height="22"><rect x="7" y="1.5" width="14.5" height="19" rx="1.5" fill="#1a8ad8"/><rect x="11" y="5" width="10" height="12" fill="#3ab0f0"/><rect x="0.5" y="5" width="11" height="12" rx="1.5" fill="#0c64b8"/><ellipse cx="6" cy="11" rx="2.8" ry="3.3" fill="none" stroke="#fff" stroke-width="1.5"/></svg>
<div class="a" style="left:876.5px;top:772px;width:7px;height:2.5px;border-radius:1px;background:#9a9aa8"></div>
<!-- acrobat -->
<svg class="a" style="left:909.8px;top:747px" width="20" height="20.5"><rect width="20" height="20.5" rx="2.5" fill="#c4151c"/><path d="M4 15.5 Q6 10 9.5 4 Q11 7 12 9.5 Q14 12.5 16.5 13 Q12 13 8 14.5 Q6 16 4 15.5Z" fill="none" stroke="#fff" stroke-width="1.3"/></svg>
<div class="a" style="left:916px;top:772px;width:7px;height:2.5px;border-radius:1px;background:#9a9aa8"></div>
<!-- zoom -->
<div class="a" style="left:941.4px;top:739.2px;width:36.3px;height:35.6px;border-radius:4px;background:#282e3e"></div>
<svg class="a" style="left:948px;top:746.3px" width="22" height="22"><defs><radialGradient id="zg" cx="50%" cy="40%" r="60%"><stop offset="0" stop-color="#4a8cff"/><stop offset="1" stop-color="#1a5ae0"/></radialGradient></defs><circle cx="11" cy="11" r="11" fill="url(#zg)"/><text x="11" y="12.5" font-size="4.5" text-anchor="middle" fill="#dfe8ff" font-family="Liberation Sans">zoom</text></svg>
<div class="a" style="left:952px;top:771.8px;width:15px;height:3px;border-radius:1.5px;background:#74b8f0"></div>
<!-- tray -->
<svg class="a" style="left:1040px;top:751px" width="13" height="10"><polyline points="1.5,7.5 6.5,2.5 11.5,7.5" fill="none" stroke="#eaeaea" stroke-width="1.6"/></svg>
<svg class="a" style="left:1067px;top:749px" width="17" height="17"><path d="M2.5 8 A6 6 0 0 1 13 4.5 M13.5 1.5 V5 H10" fill="none" stroke="#e0e0e0" stroke-width="1.3"/><path d="M14 9.5 A6 6 0 0 1 3.5 13 M3 16 V12.5 H6.5" fill="none" stroke="#e0e0e0" stroke-width="1.3"/><circle cx="11.5" cy="12" r="3.2" fill="#f5a020"/></svg>
<svg class="a" style="left:1098px;top:748px" width="13" height="17"><rect x="3.5" y="0.8" width="6" height="10" rx="3" fill="none" stroke="#7cc4f0" stroke-width="1.5"/><path d="M1 7.5 Q1 13 6.5 13 Q12 13 12 7.5 M6.5 13 V16" fill="none" stroke="#7cc4f0" stroke-width="1.4"/></svg>
<div class="a t" style="left:1128.7px;top:745.8px;font-size:11px;color:#ececec">ENG</div>
<div class="a t" style="left:1132.7px;top:759px;font-size:11px;color:#ececec">US</div>
<svg class="a" style="left:1164px;top:750px" width="17" height="14"><path d="M1 5 Q8.5 -1.5 16 5" fill="none" stroke="#eee" stroke-width="1.4"/><path d="M3.5 7.5 Q8.5 3 13.5 7.5" fill="none" stroke="#eee" stroke-width="1.4"/><path d="M6 10 Q8.5 7.8 11 10" fill="none" stroke="#eee" stroke-width="1.4"/><circle cx="8.5" cy="12.3" r="1.3" fill="#eee"/></svg>
<svg class="a" style="left:1186px;top:750px" width="17" height="15"><path d="M1 5 H4 L8.5 1.5 V13.5 L4 10 H1Z" fill="none" stroke="#e6e6e6" stroke-width="1.3"/><path d="M11 4.5 Q12.5 7.5 11 10.5 M13.5 2.5 Q16 7.5 13.5 12.5" fill="none" stroke="#e6e6e6" stroke-width="1.3"/></svg>
<svg class="a" style="left:1207px;top:749px" width="17" height="15"><rect x="1" y="4" width="13" height="9" rx="1.5" fill="none" stroke="#e6e6e6" stroke-width="1.3"/><rect x="14.3" y="6.5" width="1.7" height="4" fill="#e6e6e6"/><rect x="2.5" y="5.5" width="10" height="6" fill="#e6e6e6"/><path d="M5 0.5 L3 4 H6 L4 7.5" fill="none" stroke="#1b2132" stroke-width="1"/></svg>
<div class="a t" style="left:1267.8px;top:745.8px;font-size:11px;color:#ececec">17</div>
<div class="a t" style="left:1238.4px;top:759px;font-size:11px;color:#ececec">04/07/20</div>

</body></html>
